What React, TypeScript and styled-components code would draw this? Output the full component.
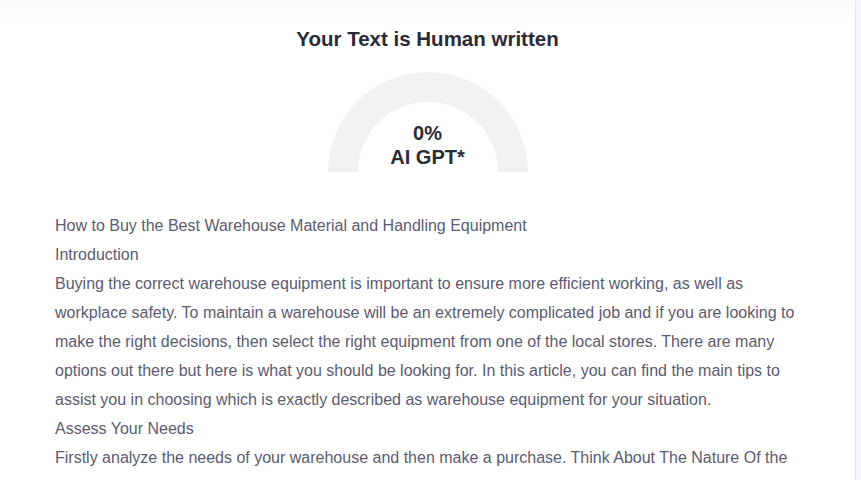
import styled, { createGlobalStyle } from 'styled-components';

const GlobalStyle = createGlobalStyle`
  html, body {
    margin: 0;
    padding: 0;
    background: #f7f7fb;
    font-family: "Liberation Sans", Arial, sans-serif;
  }
`;

const lines = [
  'How to Buy the Best Warehouse Material and Handling Equipment',
  'Introduction',
  'Buying the correct warehouse equipment is important to ensure more efficient working, as well as workplace safety. To maintain a warehouse will be an extremely complicated job and if you are looking to make the right decisions, then select the right equipment from one of the local stores. There are many options out there but here is what you should be looking for. In this article, you can find the main tips to assist you in choosing which is exactly described as warehouse equipment for your situation.',
  'Assess Your Needs',
  'Firstly analyze the needs of your warehouse and then make a purchase. Think About The Nature Of the products you store and the space available in your warehouse.',
];

interface GaugeProps {
  percent: number;
  label: string;
}

const Gauge = ({ percent, label }: GaugeProps) => {
  return (
    <GaugeBox>
      <svg width="200" height="100" viewBox="0 0 200 100">
        <path d="M0 100 A100 100 0 0 1 200 100 L170 100 A70 70 0 0 0 30 100 Z" fill="#f1f1f3" />
      </svg>
      <GaugeText>
        <Percent>{percent}%</Percent>
        <GaugeLabel>{label}</GaugeLabel>
      </GaugeText>
    </GaugeBox>
  );
};

export default function App() {
  return (
    <>
      <GlobalStyle />
      <Page>
        <Card>
          <Title>Your Text is Human written</Title>
          <Gauge percent={0} label="AI GPT*" />
          <Content>
            {lines.map((line) => (
              <Line key={line}>{line}</Line>
            ))}
          </Content>
        </Card>
      </Page>
    </>
  );
}

const Page = styled.div`
  width: 861px;
  height: 480px;
  overflow: hidden;
  padding-right: 5px;
  box-sizing: border-box;
`;

const Card = styled.div`
  margin-top: -12px;
  margin-left: -1px;
  height: 600px;
  background: #ffffff;
  border: 1px solid #e4e4f0;
  border-radius: 12px;
  background-image: linear-gradient(to bottom, #f8f8fb 0px, #ffffff 36px);
  display: flex;
  flex-direction: column;
  align-items: center;
  padding-top: 38px;
  box-sizing: border-box;
`;

const Title = styled.div`
  font-size: 20.5px;
  font-weight: 700;
  color: #2b2b38;
  line-height: 24px;
`;

const GaugeBox = styled.div`
  position: relative;
  width: 200px;
  height: 100px;
  margin-top: 21px;
  svg {
    display: block;
  }
`;

const GaugeText = styled.div`
  position: absolute;
  left: 0;
  right: 0;
  bottom: 3px;
  display: flex;
  flex-direction: column;
  align-items: center;
  color: #2b2b38;
  font-weight: 700;
  font-size: 20px;
  line-height: 24px;
`;

const Percent = styled.div``;

const GaugeLabel = styled.div``;

const Content = styled.div`
  align-self: stretch;
  margin-top: 39px;
  padding: 0 46px 0 55px;
`;

const Line = styled.div`
  font-size: 16px;
  line-height: 29px;
  color: #5b5b72;
`;
